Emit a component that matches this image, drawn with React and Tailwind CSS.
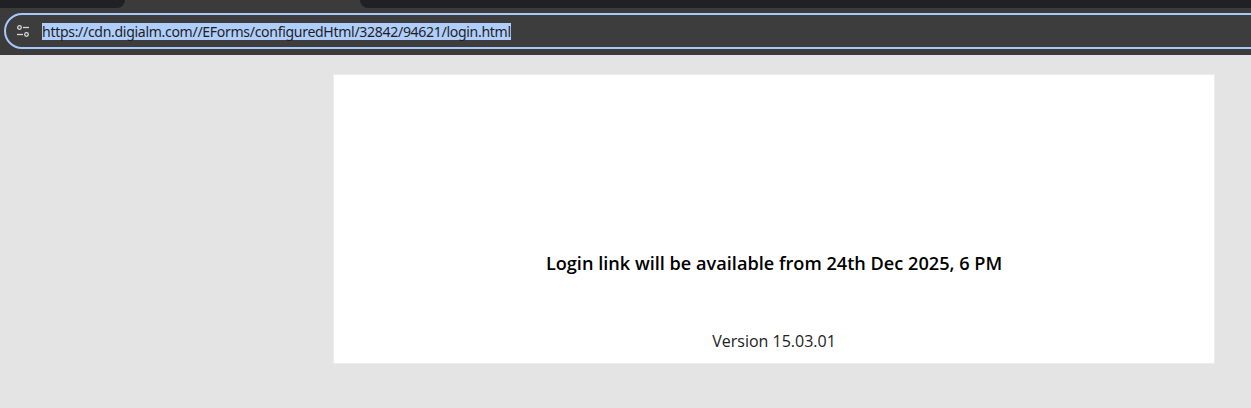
import React from 'react';

const SiteIcon = () => (
  <svg width="14" height="14" viewBox="0 0 14 14" fill="none" stroke="#d8d8d8" strokeWidth="1.3">
    <circle cx="3.5" cy="3.5" r="1.8" />
    <path d="M7 3.5h6" />
    <path d="M1 10.5h6" />
    <circle cx="10.5" cy="10.5" r="1.8" />
  </svg>
);

const App = () => {
  return (
    <div className="w-[1251px] h-[408px] overflow-hidden flex flex-col bg-[#e4e4e4] font-['Open_Sans','Noto_Sans',sans-serif]">
      <div className="h-2 flex bg-[#3b3b3b] shrink-0">
        <div className="w-[125px] bg-[#202124] rounded-br-lg" />
        <div className="w-[235px]" />
        <div className="flex-1 bg-[#202124] rounded-bl-lg" />
      </div>

      <div className="h-[47px] shrink-0 bg-[#3b3b3b] pt-[5px] pl-1">
        <div className="h-[36px] w-[1300px] flex items-center rounded-full border-2 border-[#a8c7fa] bg-[#3d3d3d]">
          <div className="ml-[10px] w-[14px] h-[14px] flex">
            <SiteIcon />
          </div>
          <span className="ml-[12px] bg-[#b0cefc] text-[#1f1f1f] text-[14.1px] tracking-[-0.33px] leading-[17px] font-['Noto_Sans','Open_Sans',sans-serif]">
            https://cdn.digialm.com//EForms/configuredHtml/32842/94621/login.html
          </span>
        </div>
      </div>

      <div className="flex-1 pl-[333px] pt-[19px]">
        <div className="w-[882px] h-[290px] bg-white border border-[#ececec] flex flex-col items-center text-black">
          <p className="mt-[176px] text-[18.15px] leading-[24px] font-semibold">
            Login link will be available from 24th Dec 2025, 6 PM
          </p>
          <p className="mt-[55px] text-[16px] leading-[22px] text-[#222]">Version 15.03.01</p>
        </div>
      </div>
    </div>
  );
};

export default App;
